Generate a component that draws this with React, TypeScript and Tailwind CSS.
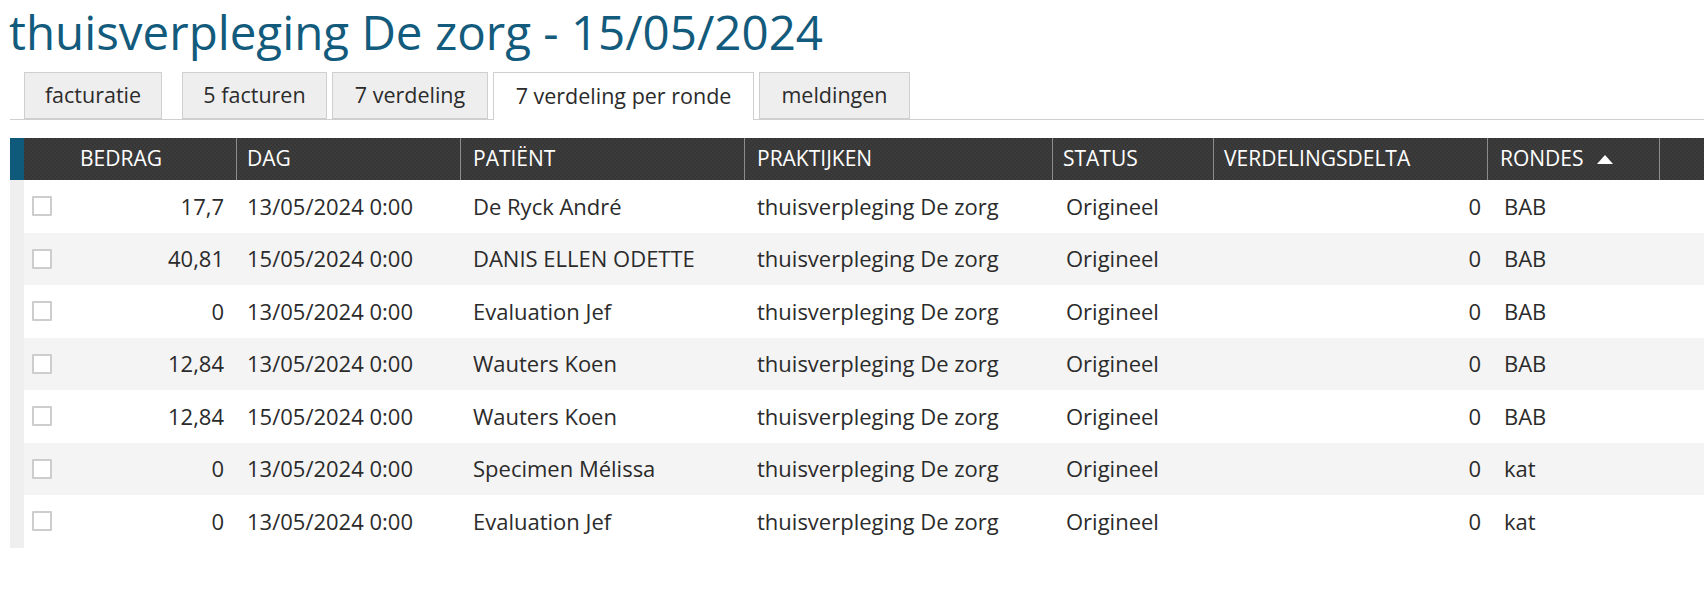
const tabs = [
  { label: "facturatie", active: false, cls: "ml-[14px] w-[138px]" },
  { label: "5 facturen", active: false, cls: "ml-[20px] w-[145px]" },
  { label: "7 verdeling", active: false, cls: "ml-[5px] w-[156px]" },
  { label: "7 verdeling per ronde", active: true, cls: "ml-[5px] w-[261px]" },
  { label: "meldingen", active: false, cls: "ml-[5px] w-[151px]" },
];

const rows = [
  { bedrag: "17,7", dag: "13/05/2024 0:00", patient: "De Ryck André", ronde: "BAB" },
  { bedrag: "40,81", dag: "15/05/2024 0:00", patient: "DANIS ELLEN ODETTE", ronde: "BAB" },
  { bedrag: "0", dag: "13/05/2024 0:00", patient: "Evaluation Jef", ronde: "BAB" },
  { bedrag: "12,84", dag: "13/05/2024 0:00", patient: "Wauters Koen", ronde: "BAB" },
  { bedrag: "12,84", dag: "15/05/2024 0:00", patient: "Wauters Koen", ronde: "BAB" },
  { bedrag: "0", dag: "13/05/2024 0:00", patient: "Specimen Mélissa", ronde: "kat" },
  { bedrag: "0", dag: "13/05/2024 0:00", patient: "Evaluation Jef", ronde: "kat" },
];

const cols =
  "grid grid-cols-[14px_46px_166px_224px_284px_308px_161px_274px_172px_1fr]";

function Checkbox() {
  return <span className="block w-[20px] h-[20px] border-2 border-[#cdcdcd] bg-white rounded-[1px]" />;
}

export default function App() {
  return (
    <div className="w-full h-[590px] bg-white text-[#2b2b2b] font-['Open_Sans',sans-serif] overflow-hidden">
      {/* Title */}
      <div className="h-[72px]">
        <h1 className="pl-[9px] text-[47.5px] leading-[64px] text-[#135b7c] font-normal whitespace-nowrap">
          thuisverpleging De zorg - 15/05/2024
        </h1>
      </div>

      {/* Tabs */}
      <div className="ml-[10px] flex items-end h-[48px] border-b border-[#cfcfcf]">
        {tabs.map((t) => (
          <div
            key={t.label}
            className={
              t.active
                ? `${t.cls} h-[48px] -mb-px flex items-center justify-center bg-white border border-b-0 border-[#cfcfcf] text-[21.5px]`
                : `${t.cls} h-[47px] flex items-center justify-center bg-[#eeeeee] border border-[#cfcfcf] text-[21.5px]`
            }
          >
            {t.label}
          </div>
        ))}
      </div>

      {/* Table */}
      <div className="ml-[10px] mt-[18px]">
        <div
          className={`${cols} h-[42px] items-stretch text-white text-[21px] bg-[#393939] bg-[repeating-conic-gradient(#3c3c3c_0_25%,#363636_0_50%)] bg-[length:4px_4px]`}
        >
          <div className="bg-[#0f5a7b]" />
          <div />
          <div className="flex items-center pl-[10px]">BEDRAG</div>
          <div className="flex items-center pl-[10px] border-l border-[#8c8c8c]">DAG</div>
          <div className="flex items-center pl-[12px] border-l border-[#8c8c8c]">PATIËNT</div>
          <div className="flex items-center pl-[12px] border-l border-[#8c8c8c]">PRAKTIJKEN</div>
          <div className="flex items-center pl-[10px] border-l border-[#8c8c8c]">STATUS</div>
          <div className="flex items-center pl-[10px] border-l border-[#8c8c8c]">VERDELINGSDELTA</div>
          <div className="flex items-center pl-[12px] border-l border-[#8c8c8c] gap-[13px]">
            RONDES
            <svg width="16" height="9" viewBox="0 0 16 9">
              <polygon points="8,0 16,9 0,9" fill="#ffffff" />
            </svg>
          </div>
          <div className="border-l border-[#8c8c8c]" />
        </div>

        {rows.map((r, i) => (
          <div
            key={i}
            className={`${cols} h-[52.5px] items-center text-[22px] ${i % 2 === 1 ? "bg-[#f4f4f4]" : "bg-white"}`}
          >
            <div className="h-full bg-[#efefef]" />
            <div className="pl-[8px]">
              <Checkbox />
            </div>
            <div className="text-right pr-[12px]">{r.bedrag}</div>
            <div className="pl-[11px]">{r.dag}</div>
            <div className="pl-[13px]">{r.patient}</div>
            <div className="pl-[13px]">thuisverpleging De zorg</div>
            <div className="pl-[14px]">Origineel</div>
            <div className="text-right pr-[6px]">0</div>
            <div className="pl-[17px]">{r.ronde}</div>
            <div />
          </div>
        ))}
      </div>
    </div>
  );
}
